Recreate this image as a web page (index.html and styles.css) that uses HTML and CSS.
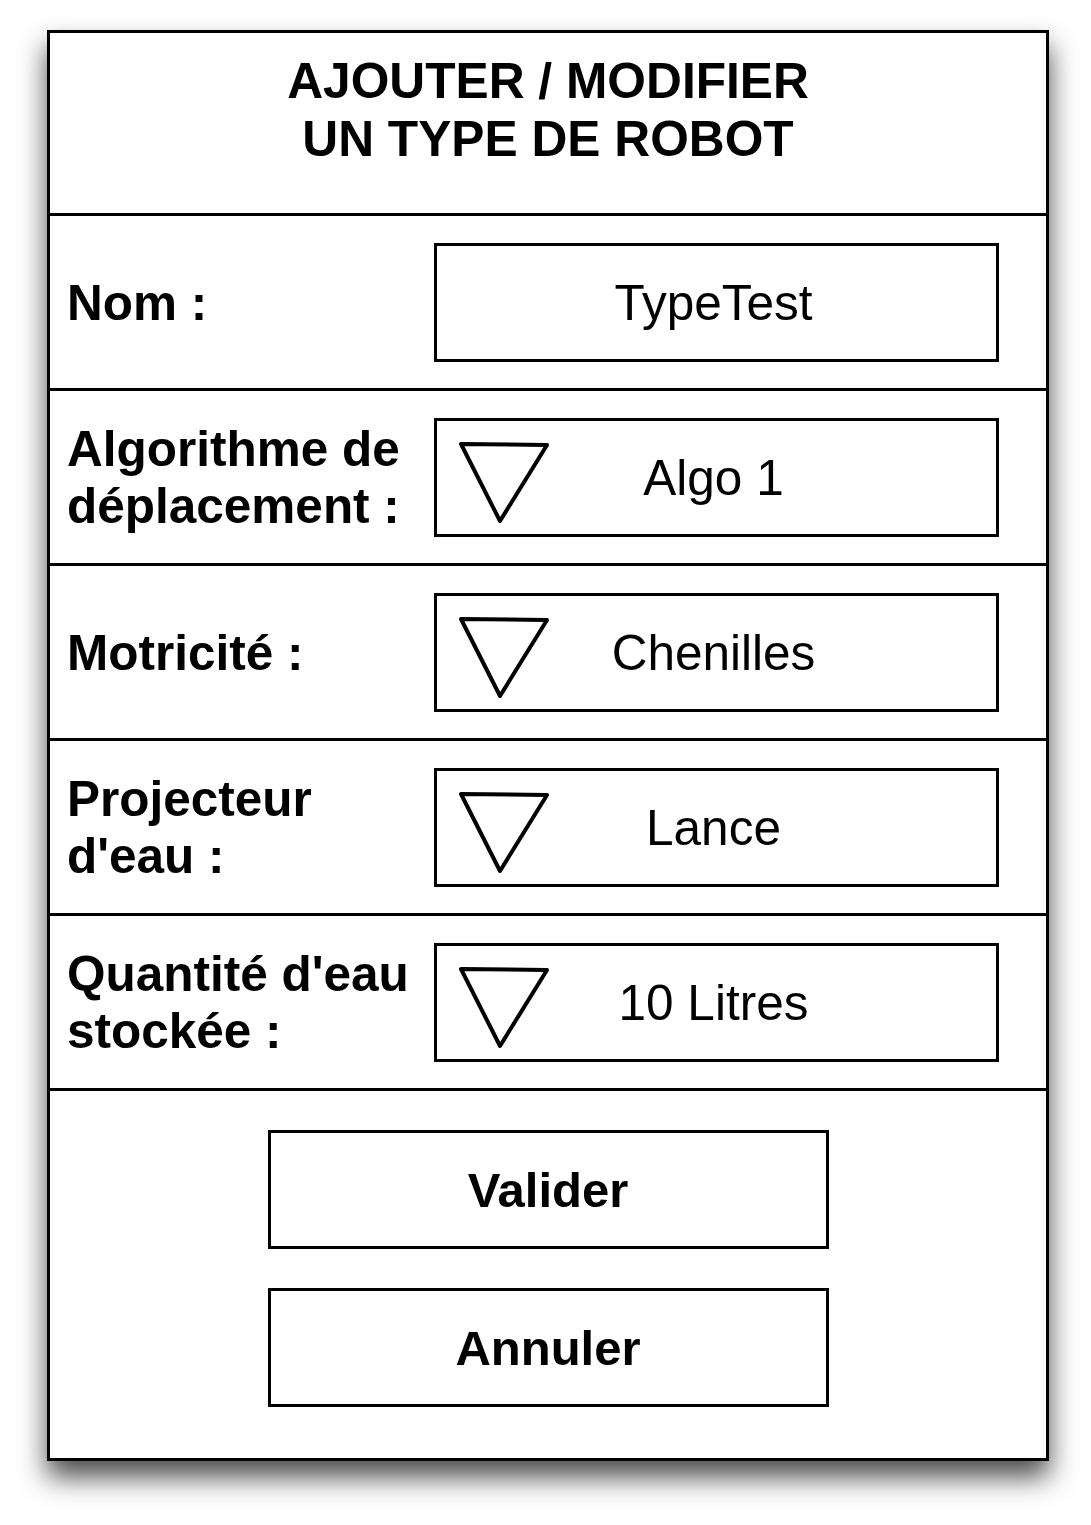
FILE: index.html
```html
<!DOCTYPE html>
<html lang="fr">
<head>
<meta charset="utf-8">
<title>Ajouter / Modifier un type de robot</title>
<link rel="stylesheet" href="styles.css">
</head>
<body>
<div class="frame">
  <div class="header">
    <h1 class="title">AJOUTER / MODIFIER<br>UN TYPE DE ROBOT</h1>
  </div>
  <div class="row">
    <div class="label">Nom :</div>
    <div class="field"><span class="value">TypeTest</span></div>
  </div>
  <div class="row">
    <div class="label">Algorithme de<br>déplacement :</div>
    <div class="field select">
      <svg class="arrow" width="96" height="86" viewBox="0 0 96 86"><polygon points="4,3 90,4 43,80" fill="none" stroke="#000" stroke-width="4" stroke-linejoin="round"/></svg>
      <span class="value">Algo 1</span>
    </div>
  </div>
  <div class="row">
    <div class="label">Motricité :</div>
    <div class="field select">
      <svg class="arrow" width="96" height="86" viewBox="0 0 96 86"><polygon points="4,3 90,4 43,80" fill="none" stroke="#000" stroke-width="4" stroke-linejoin="round"/></svg>
      <span class="value">Chenilles</span>
    </div>
  </div>
  <div class="row">
    <div class="label">Projecteur<br>d'eau :</div>
    <div class="field select">
      <svg class="arrow" width="96" height="86" viewBox="0 0 96 86"><polygon points="4,3 90,4 43,80" fill="none" stroke="#000" stroke-width="4" stroke-linejoin="round"/></svg>
      <span class="value">Lance</span>
    </div>
  </div>
  <div class="row">
    <div class="label">Quantité d'eau<br>stockée :</div>
    <div class="field select">
      <svg class="arrow" width="96" height="86" viewBox="0 0 96 86"><polygon points="4,3 90,4 43,80" fill="none" stroke="#000" stroke-width="4" stroke-linejoin="round"/></svg>
      <span class="value">10 Litres</span>
    </div>
  </div>
  <div class="footer">
    <div class="button">Valider</div>
    <div class="button">Annuler</div>
  </div>
</div>
</body>
</html>
```

FILE: styles.css
```css
html, body {
  margin: 0;
  padding: 0;
  background: #fff;
}

body {
  font-family: "Liberation Sans", Arial, Helvetica, sans-serif;
  color: #000;
  padding: 30px 0 64px 47px;
}

.frame {
  box-sizing: border-box;
  width: 1002px;
  height: 1431px;
  border: 3px solid #000;
  background: #fff;
  box-shadow: 0 16px 26px rgba(0, 0, 0, 0.7);
  display: flex;
  flex-direction: column;
}

.header {
  box-sizing: content-box;
  height: 161px;
  padding-top: 19px;
  border-bottom: 3px solid #000;
}

.title {
  margin: 0;
  text-align: center;
  font-size: 49.7px;
  line-height: 58px;
  font-weight: bold;
}

.row {
  height: 172px;
  border-bottom: 3px solid #000;
  display: flex;
  align-items: center;
}

.label {
  box-sizing: border-box;
  width: 384px;
  padding-left: 17px;
  font-size: 49.5px;
  line-height: 57px;
  font-weight: bold;
  white-space: nowrap;
}

.field {
  position: relative;
  box-sizing: border-box;
  width: 565px;
  height: 119px;
  border: 3px solid #000;
  display: flex;
  align-items: center;
  justify-content: center;
}

.value {
  font-size: 49.5px;
  padding-right: 6px;
}

.arrow {
  position: absolute;
  left: 20px;
  top: 20px;
}

.footer {
  flex: 1;
  display: flex;
  flex-direction: column;
  align-items: center;
  padding-top: 39px;
  gap: 39px;
}

.button {
  box-sizing: border-box;
  width: 561px;
  height: 119px;
  border: 3px solid #000;
  display: flex;
  align-items: center;
  justify-content: center;
  font-size: 49px;
  font-weight: bold;
}
```
